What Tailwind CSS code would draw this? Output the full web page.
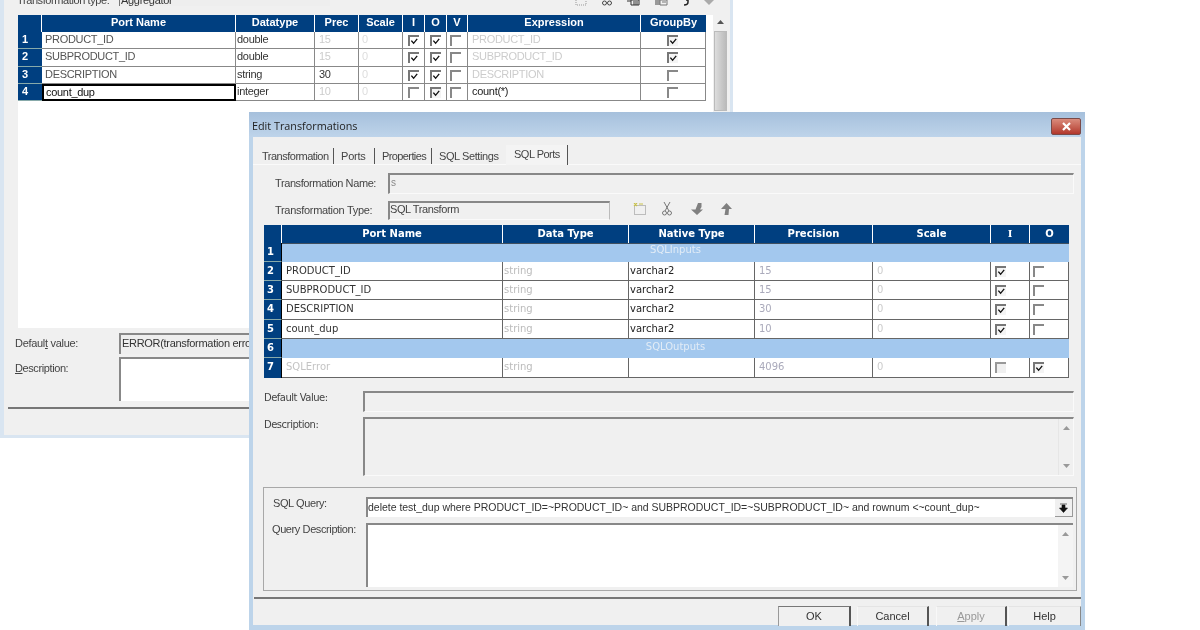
<!DOCTYPE html>
<html><head><meta charset="utf-8"><script src="https://cdn.jsdelivr.net/npm/@tailwindcss/browser@4"></script></head>
<body class="m-0 bg-white">
<div class="relative w-[1200px] h-[630px] overflow-hidden bg-white font-['Liberation_Sans',sans-serif] text-[11px] text-[#333] blur-[0.35px]">

<!-- back window -->
<div class="absolute left-0 top-0 w-[733px] h-[438px] bg-[#d9e5f1] pl-[4px] pr-[3px] pb-[3px]">
 <div class="flex flex-col h-full bg-[#f0f0f0]">
  <div class="flex h-[9px] overflow-hidden items-start shrink-0">
   <span class="ml-[13px] w-[102px] -mt-[6px] leading-[12px] text-[#444] tracking-[-0.4px] whitespace-nowrap">Transformation type:</span>
   <div class="w-[211px] h-[6px] bg-[#eee] border-l border-[#777] pl-[1px] overflow-hidden"><span class="block -mt-[6px] leading-[12px] tracking-[-0.3px]">Aggregator</span></div>
   <div class="ml-[245px] flex items-start gap-[15px] h-[6px] overflow-hidden">
    <svg class="w-[12px] h-[6px]" viewBox="0 0 12 6"><path d="M1 0v5h10V0" fill="none" stroke="#999" stroke-dasharray="1 1"/></svg>
    <svg class="w-[10px] h-[6px]" viewBox="0 0 10 6"><circle cx="2.500" cy="3" r="2" fill="none" stroke="#444"/><circle cx="7.500" cy="3" r="2" fill="none" stroke="#444"/></svg>
    <svg class="w-[13px] h-[6px]" viewBox="0 0 13 6"><path d="M0 1h4M4 0h8v5H4zM6 2h5M6 4h5" fill="none" stroke="#333"/></svg>
    <svg class="w-[13px] h-[6px]" viewBox="0 0 13 6"><rect width="5" height="5" fill="#999"/><path d="M5 0h7v5H5zM7 2h4" fill="none" stroke="#777"/></svg>
    <svg class="w-[6px] h-[6px]" viewBox="0 0 6 6"><path d="M3 0h2v2Q5 5 1 5" fill="none" stroke="#222" stroke-width="1.500"/></svg>
    <svg class="w-[10px] h-[6px]" viewBox="0 0 10 6"><path d="M0 0h10L5 5z" fill="#aaa"/></svg>
   </div>
  </div>
  <div class="mt-[6px] ml-[14px] w-[709px] h-[313px] bg-white flex items-start shrink-0">
   <div class="grid w-[688px] grid-cols-[24px_194px_79px_44px_44px_22px_22px_21px_173px_65px] grid-rows-[17px_17px_18px_17px_17px] text-[11px] leading-[15px] tracking-[-0.3px]">
    <div class="bg-[#003f80] border-r border-white"></div>
    <div class="bg-[#003f80] border-r border-white text-center font-bold text-white tracking-normal">Port Name</div>
    <div class="bg-[#003f80] border-r border-white text-center font-bold text-white tracking-normal">Datatype</div>
    <div class="bg-[#003f80] border-r border-white text-center font-bold text-white tracking-normal">Prec</div>
    <div class="bg-[#003f80] border-r border-white text-center font-bold text-white tracking-normal">Scale</div>
    <div class="bg-[#003f80] border-r border-white text-center font-bold text-white tracking-normal">I</div>
    <div class="bg-[#003f80] border-r border-white text-center font-bold text-white tracking-normal">O</div>
    <div class="bg-[#003f80] border-r border-white text-center font-bold text-white tracking-normal">V</div>
    <div class="bg-[#003f80] border-r border-white text-center font-bold text-white tracking-normal">Expression</div>
    <div class="bg-[#003f80] text-center font-bold text-white tracking-normal">GroupBy</div>

    <div class="bg-[#003f80] border-b border-[#8aa] pl-[4px] font-bold text-white">1</div>
    <div class="border-b border-r border-[#888] pl-[3px] text-[#555]">PRODUCT_ID</div>
    <div class="border-b border-r border-[#888] pl-[1px]">double</div>
    <div class="border-b border-r border-[#888] pl-[4px] text-[#ccc]">15</div>
    <div class="border-b border-r border-[#888] pl-[3px] text-[#ddd]">0</div>
    <div class="border-b border-r border-[#888] pl-[5px] pt-[3px]"><div class="w-[11px] h-[11px] border-t-2 border-l-2 border-[#777]"><svg class="w-[9px] h-[9px]" viewBox="0 0 10 10"><path d="M1.500 4l2.500 3 4-5" fill="none" stroke="#111" stroke-width="1.500"/></svg></div></div>
    <div class="border-b border-r border-[#888] pl-[5px] pt-[3px]"><div class="w-[11px] h-[11px] border-t-2 border-l-2 border-[#777]"><svg class="w-[9px] h-[9px]" viewBox="0 0 10 10"><path d="M1.500 4l2.500 3 4-5" fill="none" stroke="#111" stroke-width="1.500"/></svg></div></div>
    <div class="border-b border-r border-[#888] pl-[3px] pt-[3px]"><div class="w-[11px] h-[11px] border-t-2 border-l-2 border-[#888]"></div></div>
    <div class="border-b border-r border-[#888] pl-[4px] text-[#ccc]">PRODUCT_ID</div>
    <div class="border-b border-r border-[#888] pl-[26px] pt-[3px]"><div class="w-[11px] h-[11px] border-t-2 border-l-2 border-[#777] bg-[#f4f4f4]"><svg class="w-[9px] h-[9px]" viewBox="0 0 10 10"><path d="M1.500 4l2.500 3 4-5" fill="none" stroke="#111" stroke-width="1.500"/></svg></div></div>

    <div class="bg-[#003f80] border-b border-[#8aa] pl-[4px] font-bold text-white">2</div>
    <div class="border-b border-r border-[#888] pl-[3px] text-[#555]">SUBPRODUCT_ID</div>
    <div class="border-b border-r border-[#888] pl-[1px]">double</div>
    <div class="border-b border-r border-[#888] pl-[4px] text-[#ccc]">15</div>
    <div class="border-b border-r border-[#888] pl-[3px] text-[#ddd]">0</div>
    <div class="border-b border-r border-[#888] pl-[5px] pt-[3px]"><div class="w-[11px] h-[11px] border-t-2 border-l-2 border-[#777]"><svg class="w-[9px] h-[9px]" viewBox="0 0 10 10"><path d="M1.500 4l2.500 3 4-5" fill="none" stroke="#111" stroke-width="1.500"/></svg></div></div>
    <div class="border-b border-r border-[#888] pl-[5px] pt-[3px]"><div class="w-[11px] h-[11px] border-t-2 border-l-2 border-[#777]"><svg class="w-[9px] h-[9px]" viewBox="0 0 10 10"><path d="M1.500 4l2.500 3 4-5" fill="none" stroke="#111" stroke-width="1.500"/></svg></div></div>
    <div class="border-b border-r border-[#888] pl-[3px] pt-[3px]"><div class="w-[11px] h-[11px] border-t-2 border-l-2 border-[#888]"></div></div>
    <div class="border-b border-r border-[#888] pl-[4px] text-[#ccc]">SUBPRODUCT_ID</div>
    <div class="border-b border-r border-[#888] pl-[26px] pt-[3px]"><div class="w-[11px] h-[11px] border-t-2 border-l-2 border-[#777] bg-[#f4f4f4]"><svg class="w-[9px] h-[9px]" viewBox="0 0 10 10"><path d="M1.500 4l2.500 3 4-5" fill="none" stroke="#111" stroke-width="1.500"/></svg></div></div>

    <div class="bg-[#003f80] border-b border-[#8aa] pl-[4px] font-bold text-white">3</div>
    <div class="border-b border-r border-[#888] pl-[3px] text-[#555]">DESCRIPTION</div>
    <div class="border-b border-r border-[#888] pl-[1px]">string</div>
    <div class="border-b border-r border-[#888] pl-[4px]">30</div>
    <div class="border-b border-r border-[#888] pl-[3px] text-[#ddd]">0</div>
    <div class="border-b border-r border-[#888] pl-[5px] pt-[3px]"><div class="w-[11px] h-[11px] border-t-2 border-l-2 border-[#777]"><svg class="w-[9px] h-[9px]" viewBox="0 0 10 10"><path d="M1.500 4l2.500 3 4-5" fill="none" stroke="#111" stroke-width="1.500"/></svg></div></div>
    <div class="border-b border-r border-[#888] pl-[5px] pt-[3px]"><div class="w-[11px] h-[11px] border-t-2 border-l-2 border-[#777]"><svg class="w-[9px] h-[9px]" viewBox="0 0 10 10"><path d="M1.500 4l2.500 3 4-5" fill="none" stroke="#111" stroke-width="1.500"/></svg></div></div>
    <div class="border-b border-r border-[#888] pl-[3px] pt-[3px]"><div class="w-[11px] h-[11px] border-t-2 border-l-2 border-[#888]"></div></div>
    <div class="border-b border-r border-[#888] pl-[4px] text-[#ccc]">DESCRIPTION</div>
    <div class="border-b border-r border-[#888] pl-[26px] pt-[3px]"><div class="w-[11px] h-[11px] border-t-2 border-l-2 border-[#888]"></div></div>

    <div class="bg-[#003f80] border-b border-[#8aa] pl-[4px] font-bold text-white">4</div>
    <div class="border-2 border-black pl-[2px] text-[#111] leading-[12px]">count_dup</div>
    <div class="border-b border-r border-[#888] pl-[1px]">integer</div>
    <div class="border-b border-r border-[#888] pl-[4px] text-[#ccc]">10</div>
    <div class="border-b border-r border-[#888] pl-[3px] text-[#ddd]">0</div>
    <div class="border-b border-r border-[#888] pl-[5px] pt-[3px]"><div class="w-[11px] h-[11px] border-t-2 border-l-2 border-[#888]"></div></div>
    <div class="border-b border-r border-[#888] pl-[5px] pt-[3px]"><div class="w-[11px] h-[11px] border-t-2 border-l-2 border-[#777] bg-[#f4f4f4]"><svg class="w-[9px] h-[9px]" viewBox="0 0 10 10"><path d="M1.500 4l2.500 3 4-5" fill="none" stroke="#111" stroke-width="1.500"/></svg></div></div>
    <div class="border-b border-r border-[#888] pl-[3px] pt-[3px]"><div class="w-[11px] h-[11px] border-t-2 border-l-2 border-[#888]"></div></div>
    <div class="border-b border-r border-[#888] pl-[4px] text-[#222]">count(*)</div>
    <div class="border-b border-r border-[#888] pl-[26px] pt-[3px]"><div class="w-[11px] h-[11px] border-t-2 border-l-2 border-[#888]"></div></div>
   </div>
   <div class="ml-[7px] w-[14px] h-[313px] bg-[#f0f0f0] flex flex-col items-center pt-[5px]">
    <svg class="w-[7px] h-[4px]" viewBox="0 0 7 4"><path d="M0 4h7L3.500 0z" fill="#555"/></svg>
    <div class="mt-[7px] w-[13px] h-[80px] bg-gradient-to-r from-[#ddd] to-[#bbb] border border-[#bbb]"></div>
   </div>
  </div>
  <div class="mt-[5px] flex items-center h-[21px] shrink-0">
   <span class="ml-[11px] w-[104px] text-[#444] tracking-[-0.3px]">Defaul<u>t</u> value:</span>
   <div class="w-[140px] h-[21px] border-t-2 border-l-2 border-[#888] bg-[#eee] pl-[1px] leading-[17px] whitespace-nowrap overflow-hidden text-[#333] tracking-[-0.3px]">ERROR(transformation error)</div>
  </div>
  <div class="mt-[3px] flex items-start h-[45px] shrink-0">
   <span class="ml-[11px] w-[104px] mt-[3px] text-[#444] tracking-[-0.4px]"><u>D</u>escription:</span>
   <div class="w-[140px] h-[44px] border-t-2 border-l-2 border-[#888] bg-white"></div>
  </div>
  <div class="mt-[5px] ml-[4px] h-[2px] bg-[#777] shrink-0"></div>
 </div>
</div>

<!-- front window -->
<div class="absolute left-[249px] top-[112px] w-[836px] h-[518px] bg-[#bdd4ea] flex flex-col">
 <div class="h-[25px] shrink-0 bg-gradient-to-b from-[#a6c0dc] to-[#bed4ea] flex items-center justify-between pl-[3px] pr-[4px] pt-[4px]">
  <span class="text-[#222] text-[10.800px] font-['Open_Sans',sans-serif]">Edit Transformations</span>
  <div class="w-[30px] h-[17px] rounded-[2px] border border-[#7a4a48] bg-gradient-to-b from-[#d98b7c] to-[#b2362c] flex items-center justify-center">
   <svg class="w-[11px] h-[9px]" viewBox="0 0 11 9"><path d="M2 1l7 7M9 1L2 8" stroke="#fff" stroke-width="2.200"/></svg>
  </div>
 </div>
 <div class="ml-[4px] mr-[4px] h-[488px] shrink-0 bg-[#f0f0f0] flex flex-col">
  <div class="mt-[8px] pl-[5px] h-[20px] flex items-start border-b border-[#fafafa] text-[11px] text-[#444] shrink-0">
   <span class="w-[76px] mt-[3px] pl-[4px] border-r border-[#555] leading-[16px] tracking-[-0.5px]">Transformation</span>
   <span class="w-[41px] mt-[3px] pl-[7px] border-r border-[#555] leading-[16px] tracking-[-0.2px]">Ports</span>
   <span class="w-[57px] mt-[3px] pl-[7px] border-r border-[#555] leading-[16px] tracking-[-0.6px]">Properties</span>
   <span class="w-[74px] mt-[3px] pl-[7px] leading-[16px] whitespace-nowrap tracking-[-0.4px]">SQL Settings</span>
   <span class="w-[62px] h-[20px] pl-[8px] pt-[1px] border-r border-[#555] bg-[#f4f4f4] leading-[16px] tracking-[-0.5px]">SQL Ports</span>
  </div>
  <div class="mt-[8px] flex items-center h-[21px] shrink-0">
   <span class="ml-[22px] w-[113px] text-[#444] tracking-[-0.4px]">Transformation Name:</span>
   <div class="w-[686px] h-[21px] border-t-2 border-l-2 border-[#888] border-b border-r border-b-[#fafafa] border-r-[#fafafa] pl-[1px] text-[10px] leading-[15px] text-[#888]">s</div>
  </div>
  <div class="mt-[7px] flex items-center h-[19px] shrink-0">
   <span class="ml-[22px] w-[113px] text-[#444] tracking-[-0.3px]">Transformation Type:</span>
   <div class="w-[222px] h-[19px] border-t-2 border-l-2 border-[#888] border-b border-r border-b-[#fafafa] border-r-[#bbb] leading-[12px] text-[#444] tracking-[-0.4px]">SQL Transform</div>
   <div class="ml-[23px] flex items-center -mt-[4px]">
    <svg class="w-[14px] h-[12px]" viewBox="0 0 14 12"><rect x="1.500" y="2.500" width="11" height="9" fill="none" stroke="#888" stroke-dasharray="1 1"/><path d="M1 0l3 3M4 0L1 3M6 1h4" stroke="#c9c24c" stroke-width="1.200"/></svg>
    <svg class="ml-[15px] w-[10px] h-[14px]" viewBox="0 0 10 14"><path d="M2 0l5 9M8 0L3 9" stroke="#777" fill="none"/><circle cx="2.500" cy="11" r="2" fill="none" stroke="#777"/><circle cx="7.500" cy="11" r="2" fill="none" stroke="#777"/></svg>
    <svg class="ml-[19px] w-[12px] h-[12px]" viewBox="0 0 12 12"><path d="M7 0h3.500v4L9 6.500h3L6 12 0 6.500h4.500z" fill="#808080"/></svg>
    <svg class="ml-[17px] w-[12px] h-[12px]" viewBox="0 0 12 12"><path d="M6.500 0l5.500 6H9L8.500 12H4.500L5.500 6H1z" fill="#808080"/></svg>
   </div>
  </div>
  <div class="mt-[5px] ml-[11px] w-[805px] grid grid-cols-[18px_221px_126px_126px_118px_118px_39px_39px] grid-rows-[18px_19px_19px_19px_20px_19px_19px_20px] font-['DejaVu_Sans',sans-serif] text-[10px] leading-[17px] shrink-0">
   <div class="bg-[#003f80] border-r border-white"></div>
   <div class="bg-[#003f80] border-r border-white text-center font-bold text-white">Port Name</div>
   <div class="bg-[#003f80] border-r border-white text-center font-bold text-white">Data Type</div>
   <div class="bg-[#003f80] border-r border-white text-center font-bold text-white">Native Type</div>
   <div class="bg-[#003f80] border-r border-white text-center font-bold text-white">Precision</div>
   <div class="bg-[#003f80] border-r border-white text-center font-bold text-white">Scale</div>
   <div class="bg-[#003f80] border-r border-white text-center font-bold text-white font-['DejaVu_Serif',serif]">I</div>
   <div class="bg-[#003f80] text-center font-bold text-white">O</div>

   <div class="bg-[#003f80] border-b border-r border-b-[#8aa] border-r-black pl-[3px] font-bold text-white">1</div>
   <div class="col-span-7 bg-[#a3c8ee] border-t border-black/60 text-center text-[#e2ecf6] leading-[12px]">SQLInputs</div>

   <div class="bg-[#003f80] border-b border-r border-b-[#8aa] border-r-black pl-[3px] font-bold text-white">2</div>
   <div class="bg-white border-b border-r border-[#666] pl-[4px] text-[#333]">PRODUCT_ID</div>
   <div class="bg-white border-b border-r border-[#666] pl-[1px] text-[#bbb]">string</div>
   <div class="bg-white border-b border-r border-[#666] pl-[1px] text-[#222]">varchar2</div>
   <div class="bg-white border-b border-r border-[#666] pl-[4px] text-[#aab]">15</div>
   <div class="bg-white border-b border-r border-[#666] pl-[4px] text-[#ccc]">0</div>
   <div class="bg-white border-b border-r border-[#666] pl-[4px] pt-[4px]"><div class="w-[11px] h-[11px] border-t-2 border-l-2 border-[#777] bg-[#f4f4f4]"><svg class="w-[9px] h-[9px]" viewBox="0 0 10 10"><path d="M1.500 4l2.500 3 4-5" fill="none" stroke="#111" stroke-width="1.500"/></svg></div></div>
   <div class="bg-white border-b border-r border-[#666] pl-[3px] pt-[4px]"><div class="w-[11px] h-[11px] border-t-2 border-l-2 border-[#888]"></div></div>

   <div class="bg-[#003f80] border-b border-r border-b-[#8aa] border-r-black pl-[3px] font-bold text-white">3</div>
   <div class="bg-white border-b border-r border-[#666] pl-[4px] text-[#333]">SUBPRODUCT_ID</div>
   <div class="bg-white border-b border-r border-[#666] pl-[1px] text-[#bbb]">string</div>
   <div class="bg-white border-b border-r border-[#666] pl-[1px] text-[#222]">varchar2</div>
   <div class="bg-white border-b border-r border-[#666] pl-[4px] text-[#aab]">15</div>
   <div class="bg-white border-b border-r border-[#666] pl-[4px] text-[#ccc]">0</div>
   <div class="bg-white border-b border-r border-[#666] pl-[4px] pt-[4px]"><div class="w-[11px] h-[11px] border-t-2 border-l-2 border-[#777] bg-[#f4f4f4]"><svg class="w-[9px] h-[9px]" viewBox="0 0 10 10"><path d="M1.500 4l2.500 3 4-5" fill="none" stroke="#111" stroke-width="1.500"/></svg></div></div>
   <div class="bg-white border-b border-r border-[#666] pl-[3px] pt-[4px]"><div class="w-[11px] h-[11px] border-t-2 border-l-2 border-[#888]"></div></div>

   <div class="bg-[#003f80] border-b border-r border-b-[#8aa] border-r-black pl-[3px] font-bold text-white">4</div>
   <div class="bg-white border-b border-r border-[#666] pl-[4px] text-[#333]">DESCRIPTION</div>
   <div class="bg-white border-b border-r border-[#666] pl-[1px] text-[#bbb]">string</div>
   <div class="bg-white border-b border-r border-[#666] pl-[1px] text-[#222]">varchar2</div>
   <div class="bg-white border-b border-r border-[#666] pl-[4px] text-[#aab]">30</div>
   <div class="bg-white border-b border-r border-[#666] pl-[4px] text-[#ccc]">0</div>
   <div class="bg-white border-b border-r border-[#666] pl-[4px] pt-[4px]"><div class="w-[11px] h-[11px] border-t-2 border-l-2 border-[#777] bg-[#f4f4f4]"><svg class="w-[9px] h-[9px]" viewBox="0 0 10 10"><path d="M1.500 4l2.500 3 4-5" fill="none" stroke="#111" stroke-width="1.500"/></svg></div></div>
   <div class="bg-white border-b border-r border-[#666] pl-[3px] pt-[4px]"><div class="w-[11px] h-[11px] border-t-2 border-l-2 border-[#888]"></div></div>

   <div class="bg-[#003f80] border-b border-r border-b-[#8aa] border-r-black pl-[3px] font-bold text-white">5</div>
   <div class="bg-white border-b border-r border-[#666] pl-[4px] text-[#333]">count_dup</div>
   <div class="bg-white border-b border-r border-[#666] pl-[1px] text-[#bbb]">string</div>
   <div class="bg-white border-b border-r border-[#666] pl-[1px] text-[#222]">varchar2</div>
   <div class="bg-white border-b border-r border-[#666] pl-[4px] text-[#aab]">10</div>
   <div class="bg-white border-b border-r border-[#666] pl-[4px] text-[#ccc]">0</div>
   <div class="bg-white border-b border-r border-[#666] pl-[4px] pt-[4px]"><div class="w-[11px] h-[11px] border-t-2 border-l-2 border-[#777] bg-[#f4f4f4]"><svg class="w-[9px] h-[9px]" viewBox="0 0 10 10"><path d="M1.500 4l2.500 3 4-5" fill="none" stroke="#111" stroke-width="1.500"/></svg></div></div>
   <div class="bg-white border-b border-r border-[#666] pl-[3px] pt-[4px]"><div class="w-[11px] h-[11px] border-t-2 border-l-2 border-[#888]"></div></div>

   <div class="bg-[#003f80] border-b border-r border-b-[#8aa] border-r-black pl-[3px] font-bold text-white">6</div>
   <div class="col-span-7 bg-[#a3c8ee] text-center text-[#e2ecf6] leading-[16px]">SQLOutputs</div>

   <div class="bg-[#003f80] border-r border-black pl-[3px] font-bold text-white">7</div>
   <div class="bg-white border-b border-r border-[#666] pl-[4px] text-[#c4c4c4]">SQLError</div>
   <div class="bg-white border-b border-r border-[#666] pl-[1px] text-[#bbb]">string</div>
   <div class="bg-white border-b border-r border-[#666] pl-[1px]"></div>
   <div class="bg-white border-b border-r border-[#666] pl-[4px] text-[#aab]">4096</div>
   <div class="bg-white border-b border-r border-[#666] pl-[4px] text-[#ccc]">0</div>
   <div class="bg-white border-b border-r border-[#666] pl-[4px] pt-[4px]"><div class="w-[11px] h-[11px] border-t-2 border-l-2 border-[#999] bg-[#f0f0f0]"></div></div>
   <div class="bg-white border-b border-r border-[#666] pl-[3px] pt-[4px]"><div class="w-[11px] h-[11px] border-t-2 border-l-2 border-[#777] bg-[#f4f4f4]"><svg class="w-[9px] h-[9px]" viewBox="0 0 10 10"><path d="M1.500 4l2.500 3 4-5" fill="none" stroke="#111" stroke-width="1.500"/></svg></div></div>
  </div>
  <div class="mt-[13px] flex h-[21px] shrink-0">
   <span class="ml-[11px] w-[99px] -mt-[1px] text-[10px] font-['DejaVu_Sans',sans-serif] text-[#444] tracking-[-0.5px]">Default Value:</span>
   <div class="w-[711px] h-[21px] border-t-2 border-l-2 border-[#888] border-b border-r border-b-[#fafafa] border-r-[#fafafa]"></div>
  </div>
  <div class="mt-[5px] flex h-[59px] shrink-0">
   <span class="ml-[11px] w-[99px] text-[10px] font-['DejaVu_Sans',sans-serif] text-[#444] tracking-[-0.5px]">Description:</span>
   <div class="w-[711px] h-[59px] border-t-2 border-l-2 border-[#888] border-b border-r border-b-[#fafafa] border-r-[#fafafa] flex justify-end">
    <div class="w-[15px] border-l border-[#e6e6e6] flex flex-col items-center justify-between py-[7px]">
     <svg class="w-[7px] h-[4px]" viewBox="0 0 7 4"><path d="M0 4h7L3.500 0z" fill="#999"/></svg>
     <svg class="w-[7px] h-[4px]" viewBox="0 0 7 4"><path d="M0 0h7L3.500 4z" fill="#999"/></svg>
    </div>
   </div>
  </div>
  <div class="mt-[11px] ml-[10px] w-[814px] h-[104px] border border-[#a8a8a8] pt-[9px] shrink-0">
   <div class="flex h-[20px]">
    <span class="ml-[9px] w-[93px] -mt-[2px] text-[#444] tracking-[-0.4px]">SQL Query:</span>
    <div class="w-[707px] h-[20px] border-t-2 border-l-2 border-[#888] bg-white flex items-center justify-between text-[10.500px] text-[#333] whitespace-nowrap">
     <span class="tracking-[-0.02px]">delete test_dup where PRODUCT_ID=~PRODUCT_ID~ and SUBPRODUCT_ID=~SUBPRODUCT_ID~ and rownum &lt;~count_dup~</span>
     <div class="w-[18px] h-[18px] bg-[#f0f0f0] border-r border-b border-[#999] flex items-center justify-center">
      <svg class="w-[9px] h-[10px]" viewBox="0 0 9 10"><path d="M1 1h7M3 2h3v3h2.500L4.500 9.500.5 5H3z" fill="#111" stroke="#111" stroke-width=".6"/></svg>
     </div>
    </div>
   </div>
   <div class="mt-[6px] flex h-[64px]">
    <span class="ml-[8px] w-[94px] -mt-[2px] text-[#444] tracking-[-0.4px]">Query Description:</span>
    <div class="w-[707px] h-[64px] border-t-2 border-l-2 border-[#888] bg-white flex justify-end">
     <div class="w-[15px] bg-[#f4f4f4] flex flex-col items-center justify-between py-[7px]">
      <svg class="w-[7px] h-[4px]" viewBox="0 0 7 4"><path d="M0 4h7L3.500 0z" fill="#999"/></svg>
      <svg class="w-[7px] h-[4px]" viewBox="0 0 7 4"><path d="M0 0h7L3.500 4z" fill="#999"/></svg>
     </div>
    </div>
   </div>
  </div>
  <div class="mt-[6px] ml-[1px] h-[2px] bg-[#777] shrink-0"></div>
  <div class="mt-[7px] h-[20px] flex text-[11px] text-[#333] text-center leading-[19px] shrink-0">
   <div class="ml-[525px] w-[73px] h-[20px] border-t border-l border-r-2 border-t-[#777] border-l-[#999] border-r-[#555] bg-[#f0f0f0]">OK</div>
   <div class="ml-[6px] w-[72px] h-[20px] border-t border-l border-r-2 border-t-[#e4e4e4] border-l-[#f8f8f8] border-r-[#555]">Cancel</div>
   <div class="ml-[7px] w-[71px] h-[20px] border-t border-l border-r-2 border-t-[#e4e4e4] border-l-[#f8f8f8] border-r-[#555] text-[#999]"><u>A</u>pply</div>
   <div class="ml-[1px] w-[73px] h-[20px] border-t border-l border-r border-t-[#e4e4e4] border-l-[#f8f8f8] border-r-[#888]">Help</div>
  </div>
 </div>
</div>

</div>
</body></html>
